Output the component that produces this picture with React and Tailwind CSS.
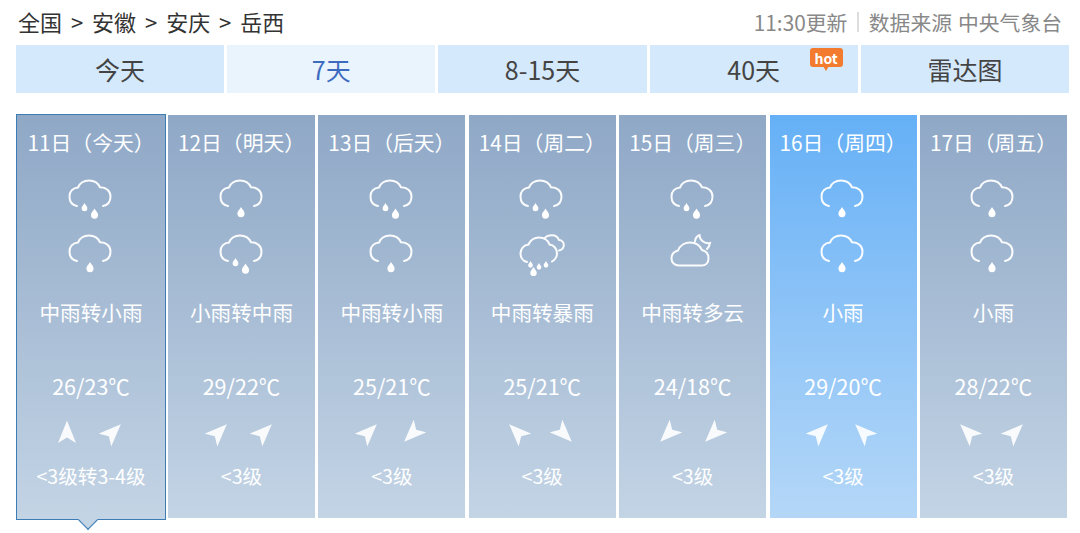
import React from 'react';

const tabs = [
  { label: '今天' },
  { label: '7天', active: true },
  { label: '8-15天' },
  { label: '40天', hot: true },
  { label: '雷达图' }
];

const days = [
  { date: '11日（今天）', icons: ['rain2', 'rain1'], text: '中雨转小雨', temp: '26/23℃', wind: [0, 45], level: '<3级转3-4级', selected: true },
  { date: '12日（明天）', icons: ['rain1', 'rain2'], text: '小雨转中雨', temp: '29/22℃', wind: [45, 45], level: '<3级' },
  { date: '13日（后天）', icons: ['rain2', 'rain1'], text: '中雨转小雨', temp: '25/21℃', wind: [45, 225], level: '<3级' },
  { date: '14日（周二）', icons: ['rain2', 'storm'], text: '中雨转暴雨', temp: '25/21℃', wind: [315, 135], level: '<3级' },
  { date: '15日（周三）', icons: ['rain2', 'moon'], text: '中雨转多云', temp: '24/18℃', wind: [225, 225], level: '<3级' },
  { date: '16日（周四）', icons: ['rain1', 'rain1'], text: '小雨', temp: '29/20℃', wind: [45, 315], level: '<3级', blue: true },
  { date: '17日（周五）', icons: ['rain1', 'rain1'], text: '小雨', temp: '28/22℃', wind: [315, 45], level: '<3级' }
];

const cloud = 'M9 27C3.5 26 1.5 21.5 1.5 17.5C1.5 12.5 5 9 10 8.5C12 3.8 16 1.5 21 1.5C26 1.5 30 4 32 8.2C38 8 42.5 12 42.5 17.5C42.5 22 40 26 35 27';
const drop = (x, y, s = 1) =>
  `M${x} ${y}C${x + 1.2 * s} ${y + 2.6 * s} ${x + 3.6 * s} ${y + 4 * s} ${x + 3.6 * s} ${y + 6.6 * s}A${3.6 * s} ${3.6 * s} 0 0 1 ${x - 3.6 * s} ${y + 6.6 * s}C${x - 3.6 * s} ${y + 4 * s} ${x - 1.2 * s} ${y + 2.6 * s} ${x} ${y}Z`;

const WeatherIcon = ({ type }) => {
  let lines = [];
  let fills = [];
  if (type === 'rain1') {
    lines = [cloud];
    fills = [drop(22, 28, 1)];
  } else if (type === 'rain2') {
    lines = [cloud];
    fills = [drop(16.5, 24, 0.8), drop(26.5, 29.5, 1)];
  } else if (type === 'storm') {
    lines = [
      'M8 28C3.5 27 1.5 23 1.5 19.5C1.5 14.5 5 11 9.5 10.5C11.5 6 15.5 3.5 20 3.5C25 3.5 29 6.5 30.5 10.5C35 11 38 15 38 19.5C38 23 35.5 26 33 27.5',
      'M25.5 4.5C27 1.8 30 1.2 33 1.2C36.5 1.2 38.8 3 40 6C43 6.2 44.8 8.5 44.8 11C44.8 13.8 43 15.8 40 16.5'
    ];
    fills = [drop(11.5, 27, 0.65), drop(20, 29, 0.65), drop(27, 27, 0.65), drop(14.5, 33, 0.9)];
  } else {
    lines = [
      'M9 31.5C4.5 31.5 1.5 28.5 1.5 24.5C1.5 20.5 4 17.5 8 16.5C10 11.5 15 8.5 20 8.5C25.5 8.5 30 11.5 32 16C36.5 17 38.5 20.5 38.5 24.5C38.5 28.5 36 31.5 31.5 31.5Z',
      'M25 7.5C25.3 4.5 27 2 29.5 1C29.5 5.5 33.5 10 40 9C39.6 11.5 38.5 13.5 37 15'
    ];
  }
  return (
    <svg width="46" height="42" viewBox="0 0 46 42" className="blur-[0.45px]" fill="none">
      {lines.map((d) => (
        <path key={d} d={d} stroke="#fff" strokeWidth="2" strokeLinecap="round" strokeOpacity="0.95" />
      ))}
      {fills.map((d) => (
        <path key={d} d={d} fill="#fff" />
      ))}
    </svg>
  );
};

const WindArrow = ({ angle }) => (
  <svg width="26" height="26" viewBox="-13 -13 26 26" className="blur-[0.6px]">
    <path d="M0 -12.5L9 10L0 4.5L-9 10Z" fill="#fff" fillOpacity="0.9" transform={`rotate(${angle})`} />
  </svg>
);

const DayCard = ({ day }) => {
  let cardClass = 'w-[147px] bg-linear-to-b from-[#8fa8c6] to-[#c3d4e5]';
  if (day.blue) {
    cardClass = 'w-[147px] bg-linear-to-b from-[#65b0f6] to-[#b4d7f7]';
  } else if (day.selected) {
    cardClass = 'relative w-[150px] -my-[1.5px] -mr-[1.4px] border-[1.5px] border-[#3d7db5] bg-linear-to-b from-[#8fa8c6] to-[#c3d4e5]';
  }

  return (
    <div className={`shrink-0 flex flex-col items-center text-white ${cardClass}`}>
      <div className="h-[55px] flex items-center text-[20.8px] leading-none">{day.date}</div>
      <div className="mt-[9px] h-[55px]">
        <WeatherIcon type={day.icons[0]} />
      </div>
      <div className="h-[55px]">
        <WeatherIcon type={day.icons[1]} />
      </div>
      <div className="h-[47px] flex items-center text-[20.6px] leading-none">{day.text}</div>
      <div className="mt-[35px] h-[30px] flex items-center text-[21.5px] leading-none">{day.temp}</div>
      <div className="mt-[17px] -ml-[3px] h-[30px] flex items-center justify-center gap-[19px]">
        <WindArrow angle={day.wind[0]} />
        <WindArrow angle={day.wind[1]} />
      </div>
      <div className="mt-[13px] h-[30px] flex items-center text-[19.6px] leading-none">{day.level}</div>
      {day.selected && (
        <div className="absolute left-1/2 -bottom-[8.5px] -ml-[10px] w-[14px] h-[14px] rotate-45 border-r-[1.5px] border-b-[1.5px] border-[#3d7db5] bg-[#c3d4e5]" />
      )}
    </div>
  );
};

const App = () => {
  return (
    <div className="w-[1080px] h-[533px] bg-white overflow-hidden font-['Noto_Sans_CJK_SC','Noto_Sans',sans-serif]">
      <div className="h-[45px] pl-[18px] pr-[18px] flex items-center justify-between">
        <div className="-mt-[4px] text-[22px] leading-none text-[#333] [word-spacing:4px]">全国 &gt; 安徽 &gt; 安庆 &gt; 岳西</div>
        <div className="-mt-[1px] flex items-center text-[20.8px] leading-none text-[#888]">
          <span>11:30更新</span>
          <span className="mx-[10px] w-[1.5px] h-[20px] bg-[#ddd]" />
          <span>数据来源</span>
          <span className="ml-[6px]">中央气象台</span>
        </div>
      </div>

      <div className="ml-[16px] w-[1053px] h-[48px] grid grid-cols-5 gap-[3px]">
        {tabs.map((tab) => (
          <div
            key={tab.label}
            className={`relative flex items-center justify-center text-[25px] leading-none ${
              tab.active ? 'bg-[#eaf4fd] text-[#3d6bc0]' : 'bg-[#d4e9fc] text-[#444]'
            }`}
          >
            {tab.label}
            {tab.hot && (
              <div className="absolute left-[160px] top-[3px] w-[33px] h-[19px] rounded-[3px] bg-[#f27b2f] flex items-center justify-center text-[14px] font-bold leading-none text-white">
                hot
                <div className="absolute left-[13px] top-[18px] w-0 h-0 border-l-[3px] border-r-[3px] border-t-[5px] border-l-transparent border-r-transparent border-t-[#f27b2f]" />
              </div>
            )}
          </div>
        ))}
      </div>

      <div className="ml-[16px] mt-[22px] h-[403px] flex gap-[3.4px]">
        {days.map((day) => (
          <DayCard key={day.date} day={day} />
        ))}
      </div>
    </div>
  );
};

export default App;
